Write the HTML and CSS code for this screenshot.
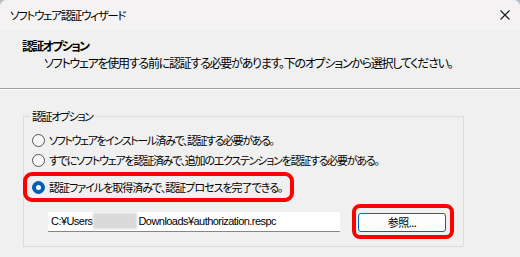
FILE: index.html
```html
<!DOCTYPE html>
<html lang="ja">

<head>
  <meta charset="UTF-8">
  <meta name="viewport" content="width=device-width, initial-scale=1.0">
  <title>ソフトウェア認証ウィザード</title>
  <link rel="stylesheet" href="styles.css">
</head>

<body>
  <div class="window">
    <div class="titlebar">
      <span class="title">ソフトウェア認証ウィザード</span>
      <svg class="close" width="10" height="10" viewBox="0 0 10 10">
        <path d="M0.5 0.5 L9.5 9.5 M9.5 0.5 L0.5 9.5" stroke="#1b1b1b" stroke-width="1.1" fill="none" />
      </svg>
    </div>

    <div class="header">
      <div class="header-title">認証オプション</div>
      <div class="header-desc">ソフトウェアを使用する前に認証する必要があります。下のオプションから選択してください。</div>
    </div>

    <div class="content">
      <fieldset class="group">
        <legend>認証オプション</legend>
        <label class="option"><span class="radio"></span>ソフトウェアをインストール済みで、認証する必要がある。</label>
        <label class="option wide"><span class="radio"></span>すでにソフトウェアを認証済みで、追加のエクステンションを認証する必要がある。</label>
        <label class="option selected"><span class="radio checked"></span>認証ファイルを取得済みで、認証プロセスを完了できる。</label>
        <div class="file-row">
          <div class="path">C:¥Users<span class="blur"></span>Downloads¥authorization.respc</div>
          <span class="mark"><button class="browse">参照...</button></span>
        </div>
      </fieldset>
    </div>
  </div>
</body>

</html>
```

FILE: styles.css
```css
html {
  background: #b9c3c6;
}

body {
  margin: 0;
  font-family: "Noto Sans CJK JP", "Noto Sans", sans-serif;
  font-size: 12px;
  color: #000;
  font-feature-settings: "palt";
}

.window {
  background: #f0f0f0;
  border-radius: 7px 7px 0 0;
  height: 257px;
  overflow: hidden;
  width: 520px;
}

.titlebar {
  align-items: center;
  background: #f4f2f2;
  display: flex;
  height: 30px;
  justify-content: space-between;
  padding: 0 10px;
  box-sizing: border-box;
}

.title {
  font-size: 11.5px;
  letter-spacing: -1.3px;
  line-height: 16px;
}

.close {
  display: block;
}

.header {
  border-bottom: 1px solid #a0a0a0;
  box-sizing: border-box;
  height: 59px;
  padding: 8px 0 0 22px;
}

.header-title {
  font-weight: 700;
  letter-spacing: -1.7px;
  line-height: 16px;
}

.header-desc {
  letter-spacing: -1.25px;
  line-height: 17px;
  margin-left: 22px;
}

.content {
  border-top: 1px solid #fff;
  padding-top: 18px;
}

.group {
  border: 1px solid #dcdcdc;
  box-sizing: border-box;
  font-size: 11px;
  letter-spacing: -1.4px;
  margin: 0 0 0 23px;
  min-width: 0;
  padding: 6px 0 7px;
  width: 441px;
}

.group legend {
  line-height: 16px;
  margin-left: 6px;
  padding: 0 2px;
}

.option {
  align-items: center;
  display: flex;
  gap: 4px;
  height: 20px;
  padding-left: 8px;
  white-space: nowrap;
}

.option.wide {
  letter-spacing: -1.25px;
}

.option.selected {
  border-radius: 5px;
  box-sizing: border-box;
  height: 22px;
  letter-spacing: -1px;
  margin: 6px 0 0 3px;
  outline: 4px solid #f00;
  padding-left: 5px;
  width: 263px;
}

.radio {
  background: #f6f6f6;
  border: 1px solid #555;
  border-radius: 50%;
  box-sizing: border-box;
  flex: none;
  height: 13px;
  position: relative;
  width: 13px;
}

.radio.checked {
  background: #005fb8;
  border-color: #005fb8;
}

.radio.checked::after {
  background: #fff;
  border-radius: 50%;
  content: "";
  height: 5px;
  left: 3px;
  position: absolute;
  top: 3px;
  width: 5px;
}

.file-row {
  align-items: center;
  display: flex;
  gap: 12px;
  letter-spacing: normal;
  margin-top: 6px;
  padding-left: 24px;
}

.path {
  align-items: center;
  background: #fff;
  border-bottom: 1px solid #868686;
  box-sizing: border-box;
  display: flex;
  font-family: "Liberation Sans", sans-serif;
  font-size: 11px;
  font-feature-settings: normal;
  height: 20px;
  letter-spacing: -0.55px;
  padding-left: 3px;
  white-space: nowrap;
  width: 292px;
}

.blur {
  background: #d9d9d9;
  display: inline-block;
  filter: blur(1px);
  height: 16px;
  margin: 0 1px;
  width: 44px;
}

.mark {
  border: 4px solid #f00;
  border-radius: 8px;
  box-sizing: border-box;
  display: flex;
  height: 35px;
  padding: 5px 4px 3px 2px;
  width: 102px;
}

.browse {
  background: #fdfdfd;
  border: 1px solid #0067c0;
  border-radius: 3px;
  font-family: inherit;
  font-size: 11px;
  height: 19px;
  letter-spacing: -0.5px;
  line-height: 15px;
  padding: 0;
  width: 88px;
}
```
